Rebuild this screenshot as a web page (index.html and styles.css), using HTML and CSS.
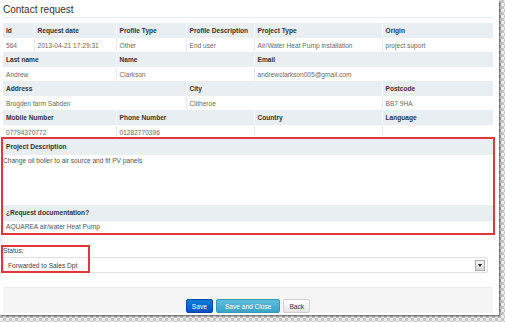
FILE: index.html
```html
<!DOCTYPE html>
<html lang="en">
<head>
    <meta charset="UTF-8">
    <title>Contact request</title>
    <link rel="stylesheet" href="styles.css">
</head>
<body>

<div class="page">
    <h3 class="title">Contact request</h3>

    <table class="info">
        <colgroup>
            <col style="width:31px">
            <col style="width:82px">
            <col style="width:70px">
            <col style="width:68px">
            <col style="width:128px">
            <col style="width:111px">
        </colgroup>
        <tr class="head">
            <th>Id</th>
            <th>Request date</th>
            <th>Profile Type</th>
            <th>Profile Description</th>
            <th>Project Type</th>
            <th>Origin</th>
        </tr>
        <tr>
            <td>564</td>
            <td>2013-04-21 17:29:31</td>
            <td>Other</td>
            <td>End user</td>
            <td>Air/Water Heat Pump installation</td>
            <td>project suport</td>
        </tr>
        <tr class="head">
            <th colspan="2">Last name</th>
            <th colspan="2">Name</th>
            <th colspan="2">Email</th>
        </tr>
        <tr>
            <td colspan="2">Andrew</td>
            <td colspan="2">Clarkson</td>
            <td colspan="2">andrewclarkson005@gmail.com</td>
        </tr>
        <tr class="head">
            <th colspan="3">Address</th>
            <th colspan="2">City</th>
            <th>Postcode</th>
        </tr>
        <tr>
            <td colspan="3">Brogden farm Sabden</td>
            <td colspan="2">Clitheroe</td>
            <td>BB7 9HA</td>
        </tr>
        <tr class="head">
            <th colspan="2">Mobile Number</th>
            <th colspan="2">Phone Number</th>
            <th>Country</th>
            <th>Language</th>
        </tr>
        <tr>
            <td colspan="2">07794370772</td>
            <td colspan="2">01282770396</td>
            <td></td>
            <td></td>
        </tr>
    </table>

    <div class="desc">
        <div class="desc-head">Project Description</div>
        <div class="desc-text">Change oil boiler to air source and fit PV panels</div>
        <div class="desc-head">¿Request documentation?</div>
        <div class="desc-value">AQUAREA air/water Heat Pump</div>
    </div>

    <div class="status">
        <div class="status-label">Status:</div>
        <div class="select">
            <span>Forwarded to Sales Dpt</span>
            <span class="select-arrow"></span>
        </div>
        <div class="mark"></div>
    </div>

    <div class="actions">
        <button class="btn btn-primary">Save</button>
        <button class="btn btn-info">Save and Close</button>
        <button class="btn">Back</button>
    </div>
</div>

</body>
</html>
```

FILE: styles.css
```css
body {
    margin: 0;
    font-family: 'Liberation Sans', Arial, sans-serif;
    background: repeating-conic-gradient(#c4c4c4 0 25%, #ededed 0 50%) 0 0 / 6px 6px;
    height: 322px;
    overflow: hidden;
}
.page {
    width: 499px;
    height: 315px;
    background-color: #ffffff;
    box-shadow: 1px 1px 2px rgba(0, 0, 0, 0.65);
    padding: 3px 6px 0 3px;
    box-sizing: border-box;
}
.title {
    margin: 0;
    font-size: 10px;
    font-weight: normal;
    line-height: 14px;
    color: #333;
    border-bottom: 1px solid #e3eef5;
}
.info {
    margin-top: 5px;
    width: 490px;
    table-layout: fixed;
    border-collapse: collapse;
    font-size: 6.6px;
}
.info th,
.info td {
    padding: 0 3px;
    text-align: left;
    white-space: nowrap;
    overflow: hidden;
}
.info th {
    height: 15px;
    background-color: #e8eef2;
    color: #333;
    font-weight: bold;
    border-left: 1px solid #f6f9fb;
}
.info td {
    height: 14px;
    color: #6a6a6a;
    border-left: 1px solid #ececec;
}
.info th:first-child,
.info td:first-child {
    border-left: none;
}
.desc {
    outline: 2px solid #e2363a;
    font-size: 6.6px;
}
.desc-head {
    height: 16px;
    line-height: 16px;
    padding-left: 3px;
    background-color: #e8eef2;
    color: #333;
    font-weight: bold;
}
.desc-text {
    height: 50px;
    padding-top: 2px;
    box-sizing: border-box;
    color: #555;
}
.desc-value {
    height: 12px;
    line-height: 12px;
    padding-left: 3px;
    color: #555;
}
.status {
    position: relative;
    margin-top: 12px;
    font-size: 6.6px;
}
.status-label {
    height: 12px;
    line-height: 11px;
    color: #444;
}
.select {
    display: flex;
    align-items: center;
    justify-content: space-between;
    width: 485px;
    height: 16px;
    padding: 0 2px 0 4px;
    box-sizing: border-box;
    border: 1px solid #e2e2e2;
    border-radius: 2px;
    color: #444;
}
.select-arrow {
    width: 8px;
    height: 9px;
    border: 1px solid #aaa;
    background: linear-gradient(#f4f4f4, #d8d8d8);
    position: relative;
}
.select-arrow::after {
    content: '';
    position: absolute;
    left: 2px;
    top: 3px;
    border-left: 2px solid transparent;
    border-right: 2px solid transparent;
    border-top: 3px solid #222;
}
.mark {
    position: absolute;
    left: -2px;
    top: 0;
    width: 85px;
    height: 24px;
    border: 2px solid #e2363a;
}
.actions {
    margin-top: 14px;
    height: 26px;
    padding-top: 11px;
    box-sizing: border-box;
    background-color: #f5f5f5;
    border-top: 1px solid #ececec;
    display: flex;
    justify-content: center;
    gap: 3px;
}
.btn {
    height: 14px;
    padding: 0 5px;
    font-family: 'Liberation Sans', Arial, sans-serif;
    font-size: 6.6px;
    color: #333;
    background: linear-gradient(#ffffff, #e6e6e6);
    border: 1px solid #cfcfcf;
    border-radius: 2px;
}
.btn-primary {
    color: #fff;
    background: linear-gradient(#0a7fd6, #0350c8);
    border-color: #0446b0;
}
.btn-info {
    color: #fff;
    padding: 0 8px;
    background: linear-gradient(#5cbfdd, #3aa3c7);
    border-color: #3498b9;
}
```
